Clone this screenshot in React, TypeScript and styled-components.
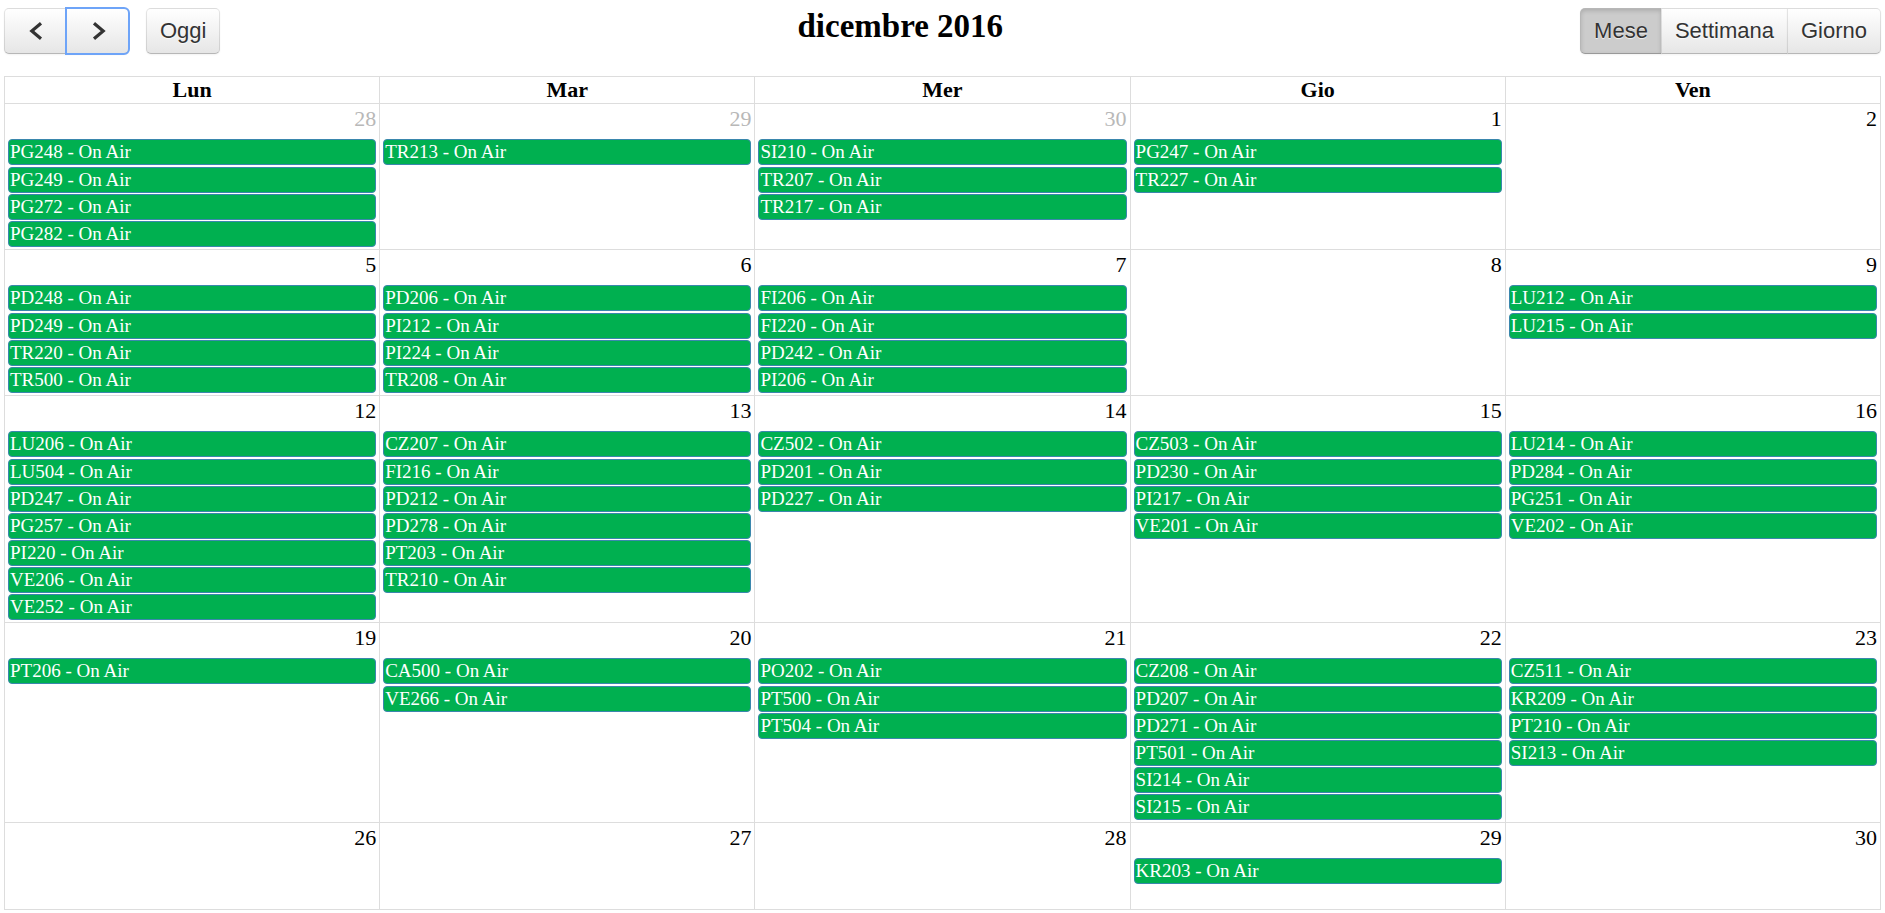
import React, { useState } from "react";
import styled, { createGlobalStyle, css } from "styled-components";

const GlobalStyle = createGlobalStyle`
  *, *::before, *::after { box-sizing: border-box; }
  body {
    margin: 0;
    background: #fff;
    color: #000;
    font-family: "Liberation Serif", "Times New Roman", serif;
    font-size: 22px;
  }
`;

const Page = styled.main`
  padding: 8px 4px 0;
`;

const Toolbar = styled.header`
  display: flex;
  justify-content: space-between;
  align-items: flex-start;
  margin-bottom: 22px;
`;

const Title = styled.h2`
  margin: 0;
  font-size: 33px;
  line-height: 36px;
  font-weight: bold;
`;

const ToolbarSide = styled.div`
  display: flex;
  gap: 17px;
`;

const ButtonGroup = styled.div`
  display: flex;
`;

const Button = styled.button<{ $active?: boolean; $focused?: boolean }>`
  display: flex;
  align-items: center;
  justify-content: center;
  min-width: 63px;
  height: 46px;
  margin: 0;
  padding: 0 13px;
  border: 1px solid;
  border-color: rgba(0, 0, 0, 0.1) rgba(0, 0, 0, 0.1) rgba(0, 0, 0, 0.25);
  border-radius: 0;
  background: #f5f5f5 linear-gradient(to bottom, #fff, #e6e6e6) repeat-x;
  box-shadow: inset 0 1px 0 rgba(255, 255, 255, 0.2), 0 1px 2px rgba(0, 0, 0, 0.05);
  color: #333;
  font-family: "Liberation Sans", Arial, sans-serif;
  font-size: 22px;
  text-shadow: 0 1px 1px rgba(255, 255, 255, 0.75);
  white-space: nowrap;
  cursor: pointer;

  & + & {
    margin-left: -1px;
  }
  &:first-child {
    border-top-left-radius: 5px;
    border-bottom-left-radius: 5px;
  }
  &:last-child {
    border-top-right-radius: 5px;
    border-bottom-right-radius: 5px;
  }

  ${(p) =>
    p.$active &&
    css`
      background: #ccc;
      box-shadow: inset 0 2px 4px rgba(0, 0, 0, 0.15), 0 1px 2px rgba(0, 0, 0, 0.05);
    `}
  ${(p) =>
    p.$focused &&
    css`
      z-index: 1;
      outline: 2px solid #6ea4f8;
      outline-offset: -1px;
    `}
`;

const Chevron = styled.svg`
  display: block;
  width: 14px;
  height: 20px;
  overflow: visible;
  fill: none;
  stroke: #333;
  stroke-width: 3.2;
`;

const MonthTable = styled.table`
  width: 100%;
  table-layout: fixed;
  border-collapse: collapse;
`;

const DayHeader = styled.th`
  height: 27px;
  padding: 0;
  border: 1px solid #ddd;
  line-height: 26px;
  font-weight: bold;
  text-align: center;

  &:first-child {
    width: calc(20% + 1px);
  }
`;

const DayCell = styled.td`
  height: 87px;
  padding: 0 3px 1px;
  border: 1px solid #ddd;
  vertical-align: top;
`;

const DayNumber = styled.div<{ $other: boolean }>`
  padding-bottom: 5px;
  line-height: 30px;
  text-align: right;
  color: ${(p) => (p.$other ? "#b8b8b8" : "#000")};
`;

const EventList = styled.ul`
  margin: 0;
  padding: 0;
  list-style: none;
`;

const EventItem = styled.li`
  margin-bottom: 1px;

  &:first-child {
    margin-bottom: 2px;
  }
`;

const EventLink = styled.a`
  display: block;
  padding: 0 1px;
  border: 1px solid #3a87ad;
  border-radius: 4px;
  background: #00b050;
  color: #fff;
  font-size: 19px;
  line-height: 24px;
  text-decoration: none;
  white-space: nowrap;
  overflow: hidden;
`;

type Day = { day: number; other?: boolean; codes: string[] };

const day = (n: number, codes = "", other = false): Day => ({
  day: n,
  other,
  codes: codes ? codes.split(" ") : [],
});

const weekdays = ["Lun", "Mar", "Mer", "Gio", "Ven"];

const weeks: Day[][] = [
  [
    day(28, "PG248 PG249 PG272 PG282", true),
    day(29, "TR213", true),
    day(30, "SI210 TR207 TR217", true),
    day(1, "PG247 TR227"),
    day(2),
  ],
  [
    day(5, "PD248 PD249 TR220 TR500"),
    day(6, "PD206 PI212 PI224 TR208"),
    day(7, "FI206 FI220 PD242 PI206"),
    day(8),
    day(9, "LU212 LU215"),
  ],
  [
    day(12, "LU206 LU504 PD247 PG257 PI220 VE206 VE252"),
    day(13, "CZ207 FI216 PD212 PD278 PT203 TR210"),
    day(14, "CZ502 PD201 PD227"),
    day(15, "CZ503 PD230 PI217 VE201"),
    day(16, "LU214 PD284 PG251 VE202"),
  ],
  [
    day(19, "PT206"),
    day(20, "CA500 VE266"),
    day(21, "PO202 PT500 PT504"),
    day(22, "CZ208 PD207 PD271 PT501 SI214 SI215"),
    day(23, "CZ511 KR209 PT210 SI213"),
  ],
  [day(26), day(27), day(28), day(29, "KR203"), day(30)],
];

const views = ["Mese", "Settimana", "Giorno"];

export default function App() {
  const [view, setView] = useState("Mese");

  return (
    <>
      <GlobalStyle />
      <Page>
        <Toolbar>
          <ToolbarSide>
            <ButtonGroup>
              <Button type="button" aria-label="Mese precedente">
                <Chevron viewBox="0 0 14 20" aria-hidden="true">
                  <path d="M12 2.2 2.8 10l9.2 7.8" />
                </Chevron>
              </Button>
              <Button type="button" aria-label="Mese successivo" $focused>
                <Chevron viewBox="0 0 14 20" aria-hidden="true">
                  <path d="M3 2.2l9.2 7.8L3 17.8" />
                </Chevron>
              </Button>
            </ButtonGroup>
            <ButtonGroup>
              <Button type="button">Oggi</Button>
            </ButtonGroup>
          </ToolbarSide>
          <Title>dicembre 2016</Title>
          <ToolbarSide>
            <ButtonGroup>
              {views.map((name) => (
                <Button
                  key={name}
                  type="button"
                  $active={view === name}
                  aria-pressed={view === name}
                  onClick={() => setView(name)}
                >
                  {name}
                </Button>
              ))}
            </ButtonGroup>
          </ToolbarSide>
        </Toolbar>
        <MonthTable>
          <thead>
            <tr>
              {weekdays.map((name) => (
                <DayHeader key={name} scope="col">
                  {name}
                </DayHeader>
              ))}
            </tr>
          </thead>
          <tbody>
            {weeks.map((week, i) => (
              <tr key={i}>
                {week.map((d) => (
                  <DayCell key={d.day}>
                    <DayNumber $other={Boolean(d.other)}>{d.day}</DayNumber>
                    {d.codes.length > 0 && (
                      <EventList>
                        {d.codes.map((code) => (
                          <EventItem key={code}>
                            <EventLink href={`#${code}`}>{code} - On Air</EventLink>
                          </EventItem>
                        ))}
                      </EventList>
                    )}
                  </DayCell>
                ))}
              </tr>
            ))}
          </tbody>
        </MonthTable>
      </Page>
    </>
  );
}
